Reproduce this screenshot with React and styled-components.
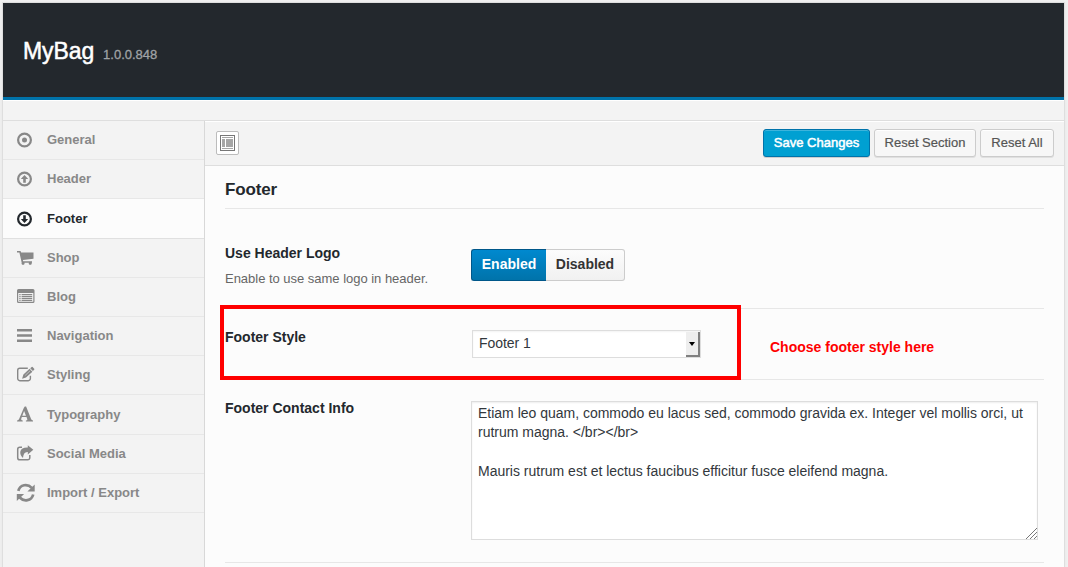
import React from "react";
import styled, { createGlobalStyle } from "styled-components";

const Global = createGlobalStyle`
  * { box-sizing: border-box; }
  html, body { margin: 0; padding: 0; }
  body {
    background: #f1f1f1;
    font-family: "Liberation Sans", Arial, Helvetica, sans-serif;
    overflow: hidden;
  }
`;

const Page = styled.div`
  position: relative;
  width: 1068px;
  height: 567px;
  padding: 2px 3px 0 2px;
  overflow: hidden;
`;

const Panel = styled.div`
  height: 565px;
  border: 1px solid #dedede;
  border-bottom: 0;
  background: #f3f3f3;
  box-shadow: 0 1px 4px rgba(0, 0, 0, 0.05);
  display: flex;
  flex-direction: column;
`;

const Banner = styled.header`
  flex: none;
  height: 97px;
  padding: 33px 20px 0;
  background: #23282d;
  border-bottom: 3px solid #0073aa;
  display: flex;
  align-items: baseline;
  gap: 9px;
  white-space: nowrap;
`;

const Brand = styled.h1`
  margin: 0;
  font-size: 23px;
  line-height: 30px;
  font-weight: 400;
  color: #fff;
  letter-spacing: -0.1px;
  -webkit-text-stroke: 0.5px #fff;
`;

const Version = styled.span`
  font-size: 13px;
  color: #a0a3a6;
  -webkit-text-stroke: 0.3px #a0a3a6;
`;

const Intro = styled.div`
  flex: none;
  height: 21px;
  border-top: 1px solid #fff;
  border-bottom: 1px solid #dedede;
`;

const Body = styled.div`
  flex: 1;
  display: flex;
  min-height: 0;
`;

const Sidebar = styled.nav`
  width: 202px;
  flex: none;
  border-right: 1px solid #d8d8d8;
`;

const NavItem = styled.a`
  display: flex;
  align-items: center;
  height: ${(p) => (p.$tall ? 40 : 39)}px;
  padding: 0 0 1px 13px;
  border-bottom: 1px solid ${(p) => (p.$active ? "#e0e0e0" : "#e7e7e7")};
  background: ${(p) => (p.$active ? "#fcfcfc" : "transparent")};
  color: ${(p) => (p.$active ? "#23282d" : "#888")};
  font-size: 13px;
  font-weight: 700;
  white-space: nowrap;
`;

const NavIcon = styled.svg`
  width: 20px;
  height: 20px;
  flex: none;
  margin: 1px 11px 0 0;
  fill: currentColor;
`;

const Main = styled.main`
  flex: 1;
  min-width: 0;
  background: #fcfcfc;
`;

const Toolbar = styled.div`
  height: 45px;
  padding: 8px 10px 0 11px;
  background: #f3f3f3;
  border-top: 1px solid #fff;
  border-bottom: 1px solid #dedede;
  display: flex;
  align-items: flex-start;
  gap: 4px;
`;

const ExpandButton = styled.button`
  width: 23px;
  height: 24px;
  margin: 1px auto 0 0;
  padding: 0;
  border: 1px solid #bcbcbc;
  border-radius: 2px;
  background: #fff;
  display: grid;
  place-items: center;
`;

const Button = styled.button`
  width: ${(p) => p.$width}px;
  height: 28px;
  margin-top: -1px;
  padding: 0 0 1px;
  border: 1px solid ${(p) => (p.$primary ? "#0073aa" : "#ccc")};
  border-radius: 3px;
  background: ${(p) => (p.$primary ? "#00a0d2" : "#f7f7f7")};
  box-shadow: ${(p) =>
    p.$primary
      ? "inset 0 1px 0 rgba(120,200,230,.5), 0 1px 0 rgba(0,0,0,.15)"
      : "inset 0 1px 0 #fff, 0 1px 0 rgba(0,0,0,.08)"};
  color: ${(p) => (p.$primary ? "#fff" : "#555")};
  -webkit-text-stroke: ${(p) => (p.$primary ? "0.5px #fff" : "0.2px #555")};
  font: 13px/24px "Liberation Sans", Arial, sans-serif;
  white-space: nowrap;
`;

const Section = styled.section`
  padding: 0 20px;
`;

const SectionTitle = styled.h2`
  margin: 0;
  height: 43px;
  padding-top: 13px;
  border-bottom: 1px solid #e7e7e7;
  font-size: 17px;
  line-height: 22px;
  letter-spacing: -0.15px;
  color: #23282d;
`;

const Field = styled.div`
  display: flex;
  height: ${(p) => p.$height}px;
  padding-top: ${(p) => p.$top}px;
  border-bottom: 1px solid #e7e7e7;
`;

const FieldLabel = styled.div`
  width: ${(p) => p.$width ?? 246}px;
  flex: none;
  margin-top: ${(p) => (p.$raised ? -2 : 0)}px;
  font-size: 14px;
  line-height: 18px;
  font-weight: 700;
  color: #23282d;
  white-space: nowrap;
`;

const Hint = styled.div`
  margin-top: 8px;
  font-size: 13px;
  line-height: 17px;
  font-weight: 400;
  letter-spacing: -0.02px;
  color: #666;
`;

const Switch = styled.div`
  display: flex;
  height: 32px;
  margin-top: 5px;
`;

const SwitchOption = styled.button`
  width: ${(p) => p.$width}px;
  height: 32px;
  padding: 0 0 2px;
  font: 700 14px/28px "Liberation Sans", Arial, sans-serif;
  color: ${(p) => (p.$on ? "#fff" : "#333")};
  background: ${(p) =>
    p.$on ? "linear-gradient(#0089cf, #0073aa)" : "linear-gradient(#fcfcfc, #f1f1f1)"};
  border: 1px solid ${(p) => (p.$on ? "#00578a" : "#ccc")};
  border-left-width: ${(p) => (p.$on ? 1 : 0)}px;
  border-right-width: ${(p) => (p.$on ? 0 : 1)}px;
  border-radius: ${(p) => (p.$on ? "3px 0 0 3px" : "0 3px 3px 0")};
`;

const SelectBox = styled.div`
  display: flex;
  width: 229px;
  height: 28px;
  padding: 1px 0 0 6px;
  border: 1px solid #ddd;
  background: #fff;
  box-shadow: inset 0 1px 2px rgba(0, 0, 0, 0.05);
  font-size: 14px;
  line-height: 22px;
  letter-spacing: -0.05px;
  color: #32373c;
`;

const SelectArrow = styled.span`
  width: 14px;
  height: 25px;
  margin-left: auto;
  background: #eee;
  border-right: 2px solid #808080;
  border-bottom: 2px solid #808080;
  display: grid;
  place-items: center;
`;

const AreaWrap = styled.div`
  position: relative;
  width: 567px;
  height: 139px;
`;

const Area = styled.textarea`
  display: block;
  width: 100%;
  height: 100%;
  margin: 0;
  padding: 2px 6px;
  border: 1px solid #ddd;
  box-shadow: inset 0 1px 2px rgba(0, 0, 0, 0.07);
  resize: none;
  outline: 0;
  overflow: hidden;
  white-space: pre;
  background: #fff;
  color: #32373c;
  font: 14px/19.3px "Liberation Sans", Arial, sans-serif;
  letter-spacing: -0.008px;
`;

const Grip = styled.svg`
  position: absolute;
  right: 1px;
  bottom: 1px;
`;

const Highlight = styled.div`
  position: absolute;
  left: 220px;
  top: 305px;
  width: 521px;
  height: 75px;
  border: 4px solid #f00;
`;

const Note = styled.div`
  position: absolute;
  left: 770px;
  top: 338px;
  font-size: 14px;
  line-height: 18px;
  font-weight: 700;
  color: #f00;
  white-space: nowrap;
`;

const ring = <circle cx="8.5" cy="10.500" r="6.400" fill="none" stroke="currentColor" strokeWidth="2.200" />;

const icons = {
  general: (
    <>
      {ring}
      <circle cx="8.5" cy="10.5" r="2.5" />
    </>
  ),
  header: (
    <>
      {ring}
      <path d="M8.5 6.4 12.2 10.6H9.8V14.2H7.2V10.6H4.8Z" />
    </>
  ),
  footer: (
    <>
      {ring}
      <path d="M8.5 14.600 12.200 10.400H9.800V6.800H7.200V10.400H4.800Z" />
    </>
  ),
  shop: (
    <path d="M1 3.600H4.500L5.200 5H17.500V11.300L6.900 12.600 7.200 13.700H16V15.200H15.600A1.500 1.500 0 1 1 12.900 15.200H8.400A1.500 1.500 0 1 1 5.700 15.200L3.400 5H1Z" />
  ),
  blog: (
    <>
      <path
        fillRule="evenodd"
        d="M2.500 2.500H17A1.500 1.500 0 0 1 18.500 4V15A1.500 1.500 0 0 1 17 16.500H2.500A1.500 1.500 0 0 1 1 15V4A1.500 1.500 0 0 1 2.500 2.500ZM2.200 6.500V14.700Q2.200 15.300 2.800 15.300H16.700Q17.300 15.300 17.300 14.700V6.500Z"
      />
      <path d="M3.300 7.500H4.600V8.700H3.300ZM5.600 7.500H16.200V8.700H5.600ZM3.300 9.500H4.600V10.700H3.300ZM5.600 9.500H16.200V10.700H5.600ZM3.300 11.500H4.600V12.700H3.300ZM5.600 11.500H16.200V12.700H5.600ZM3.300 13.500H4.600V14.500H3.300ZM5.600 13.500H16.200V14.500H5.600Z" />
    </>
  ),
  navigation: <path d="M1 3.500H16V6H1ZM1 8.700H16V11.300H1ZM1 14H16V16.500H1Z" />,
  styling: (
    <>
      <path
        d="M11.800 3.800H3.800A2.100 2.100 0 0 0 1.700 5.900V14.100A2.100 2.100 0 0 0 3.800 16.200H12.300A2.100 2.100 0 0 0 14.400 14.100V11.200"
        fill="none"
        stroke="currentColor"
        strokeWidth="1.400"
      />
      <path d="M7.400 10.100 13.600 4.300 16.400 7.200 10 13.100 6.100 14.200ZM14.200 3.700 15.700 2.500Q16.200 2.200 16.600 2.600L18.200 4.200Q18.500 4.700 18.200 5.200L16.900 6.500Z" />
      <path d="M9.200 10.900 14.200 6.200" stroke="#f3f3f3" strokeWidth=".5" />
    </>
  ),
  typography: (
    <path
      fillRule="evenodd"
      d="M8.800 2H10.100L15 14.300Q15.500 15.800 17 15.900V17H9.900V15.900Q11.700 15.900 11.300 14.700L10.500 12.500H5.900L5.200 14.300Q4.700 15.800 6.700 15.900V17H1.100V15.900Q2.600 15.800 3.200 14.300L7.900 3.200ZM8.100 6.400 6.300 11.300H10Z"
    />
  ),
  social: (
    <>
      <path
        d="M6 3.800H3.800A2.100 2.100 0 0 0 1.700 5.900V14.200A2.100 2.100 0 0 0 3.800 16.300H11.700A2.100 2.100 0 0 0 13.800 14.200V11.500"
        fill="none"
        stroke="currentColor"
        strokeWidth="1.500"
      />
      <path d="M11.800 1.800 17.300 6.300 11.800 10.900V8.400Q7.400 8 7 14.400 3.800 11.400 4.300 8.200 5.300 3.900 11.800 4.100Z" />
    </>
  ),
  transfer: (
    <>
      <path
        d="M2.300 8.400C3.900 1.800 11.600 .9 15.800 5.400M17.200 12C15.600 18.600 7.900 19.500 3.700 15"
        fill="none"
        stroke="currentColor"
        strokeWidth="2.700"
      />
      <path d="M18.700 2V8.900H11.400ZM.8 18.400V11.500H8.100Z" />
    </>
  ),
};

const items = [
  { id: "general", label: "General" },
  { id: "header", label: "Header" },
  { id: "footer", label: "Footer", tall: true, active: true },
  { id: "shop", label: "Shop" },
  { id: "blog", label: "Blog" },
  { id: "navigation", label: "Navigation" },
  { id: "styling", label: "Styling" },
  { id: "typography", label: "Typography", tall: true },
  { id: "social", label: "Social Media" },
  { id: "transfer", label: "Import / Export" },
];

const contactInfo =
  "Etiam leo quam, commodo eu lacus sed, commodo gravida ex. Integer vel mollis orci, ut\nrutrum magna. </br></br>\n\nMauris rutrum est et lectus faucibus efficitur fusce eleifend magna.";

export default function App() {
  return (
    <>
      <Global />
      <Page>
        <Panel>
          <Banner>
            <Brand>MyBag</Brand>
            <Version>1.0.0.848</Version>
          </Banner>
          <Intro />
          <Body>
            <Sidebar>
              {items.map((item) => (
                <NavItem key={item.id} $tall={item.tall} $active={item.active}>
                  <NavIcon viewBox="0 0.5 20 20">{icons[item.id]}</NavIcon>
                  {item.label}
                </NavItem>
              ))}
            </Sidebar>
            <Main>
              <Toolbar>
                <ExpandButton aria-label="Expand">
                  <svg width="15" height="16" viewBox="0 0 15 16">
                    <rect x=".5" y=".5" width="14" height="15" fill="#fff" stroke="#777" />
                    <path d="M2 2H13V3H2ZM2 4H5V12H2ZM6 4H13V12H6ZM2 13H13V14H2Z" fill="#a6a6a6" />
                  </svg>
                </ExpandButton>
                <Button $primary $width={107}>Save Changes</Button>
                <Button $width={102}>Reset Section</Button>
                <Button $width={74}>Reset All</Button>
              </Toolbar>
              <Section>
                <SectionTitle>Footer</SectionTitle>
                <Field $height={100} $top={35}>
                  <FieldLabel>
                    Use Header Logo
                    <Hint>Enable to use same logo in header.</Hint>
                  </FieldLabel>
                  <Switch>
                    <SwitchOption $on $width={75}>Enabled</SwitchOption>
                    <SwitchOption $width={79}>Disabled</SwitchOption>
                  </Switch>
                </Field>
                <Field $height={71} $top={21}>
                  <FieldLabel $raised $width={247}>Footer Style</FieldLabel>
                  <SelectBox>
                    Footer 1
                    <SelectArrow>
                      <svg width="6" height="4" viewBox="0 0 6 4">
                        <path d="M0 0H6L3 4Z" fill="#000" />
                      </svg>
                    </SelectArrow>
                  </SelectBox>
                </Field>
                <Field $height={183} $top={21}>
                  <FieldLabel $raised>Footer Contact Info</FieldLabel>
                  <AreaWrap>
                    <Area readOnly value={contactInfo} />
                    <Grip width="11" height="11" viewBox="0 0 11 11">
                      <path d="M0 11 11 0M4 11 11 4M8 11 11 8" stroke="#777" fill="none" />
                    </Grip>
                  </AreaWrap>
                </Field>
              </Section>
            </Main>
          </Body>
        </Panel>
        <Highlight />
        <Note>Choose footer style here</Note>
      </Page>
    </>
  );
}
